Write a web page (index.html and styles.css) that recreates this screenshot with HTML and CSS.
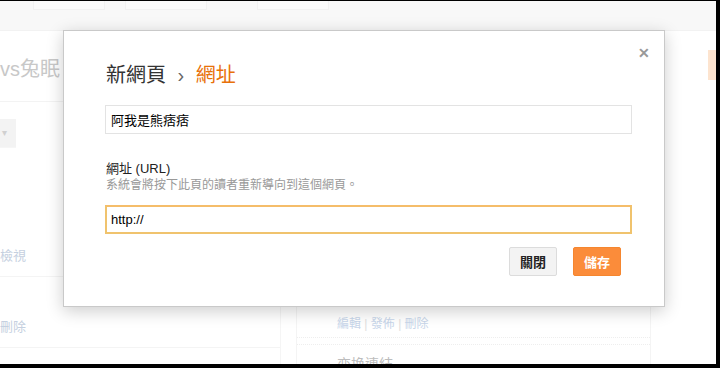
FILE: index.html
```html
<!DOCTYPE html>
<html lang="zh-Hant">
<head>
    <meta charset="UTF-8">
    <title>新網頁</title>
    <link rel="stylesheet" href="styles.css">
</head>
<body>

    <div class="frame">
        <!-- háttér oldal, elhalványítva -->
        <div class="page">
            <div class="topbar">
                <div class="tab tab-a"></div>
                <div class="tab tab-b"></div>
                <div class="tab tab-c"></div>
            </div>
            <div class="page-body">
                <div class="left-col">
                    <div class="blog-name">vs兔眠</div>
                    <div class="dropdown">▾</div>
                    <div class="row row-view">檢視</div>
                    <div class="row row-del">刪除</div>
                </div>
                <div class="mid-col">
                    <div class="panel">
                        <div class="links">編輯 <span class="sep">|</span> 發佈 <span class="sep">|</span> 刪除</div>
                        <div class="dots"></div>
                        <div class="convert">变换連結</div>
                    </div>
                </div>
                <div class="right-col">
                    <div class="orange-btn"></div>
                </div>
            </div>
        </div>

        <!-- párbeszédablak -->
        <div class="dialog">
            <span class="close">&#x2715;</span>
            <h1 class="title">新網頁 <span class="crumb">›</span> <span class="current">網址</span></h1>
            <input class="field" type="text" value="阿我是熊痞痞">
            <div class="label">網址 (URL)</div>
            <div class="hint">系統會將按下此頁的讀者重新導向到這個網頁。</div>
            <input class="field field-focus" type="text" value="http://">
            <div class="actions">
                <button class="btn btn-close">關閉</button>
                <button class="btn btn-save">儲存</button>
            </div>
        </div>
    </div>

</body>
</html>
```

FILE: styles.css
```css
body {
    margin: 0;
    padding: 0;
    background: #fff;
    font-family: 'Liberation Sans', 'Noto Sans CJK TC', sans-serif;
}

.frame {
    position: relative;
    box-sizing: border-box;
    width: 720px;
    height: 368px;
    border-top: 1px solid #000;
    border-right: 4px solid #000;
    border-bottom: 4px solid #000;
    overflow: hidden;
    background: #fff;
}

/* Háttér oldal */
.page {
    display: flex;
    flex-direction: column;
    height: 100%;
    color: #c8c8c8;
}

.topbar {
    display: flex;
    gap: 20px;
    height: 30px;
    padding-left: 33px;
    background: #f8f8f8;
    border-bottom: 1px solid #f2f2f2;
    box-sizing: border-box;
}

.tab {
    height: 8px;
    border: 1px solid #f1f1f1;
    border-top: none;
    background: #fafafa;
}

.tab-a { width: 70px; }
.tab-b { width: 80px; }
.tab-c { width: 70px; margin-left: 30px; }

.page-body {
    display: flex;
    flex: 1;
}

.left-col {
    width: 280px;
    border-right: 1px solid #f5f5f5;
}

.blog-name {
    margin-top: 28px;
    font-size: 20px;
    line-height: 20px;
    height: 42px;
    border-bottom: 1px solid #f3f3f3;
}

.dropdown {
    margin-top: 17px;
    width: 16px;
    height: 28px;
    background: #f3f3f3;
    font-size: 10px;
    line-height: 28px;
    color: #d0d0d0;
    text-indent: 2px;
    margin-bottom: 64px;
    border-bottom: 1px solid #f6f6f6;
}

.row {
    font-size: 13px;
    color: #c5d0e0;
    height: 40px;
    line-height: 40px;
    border-bottom: 1px solid #f4f4f4;
}

.row-view { padding-top: 24px; }
.row-del { padding-top: 30px; }

.mid-col {
    display: flex;
    flex-direction: column;
    justify-content: flex-end;
    width: 370px;
}

.panel {
    margin-left: 15px;
    border-left: 1px solid #f4f4f4;
    border-right: 1px solid #f4f4f4;
    height: 58px;
    padding-left: 40px;
}

.links {
    font-size: 12px;
    color: #c8d6ea;
    margin-top: 8px;
}

.sep { color: #e0e0e0; }

.dots {
    margin: 6px 0 0 -40px;
    height: 6px;
    border-top: 1px dotted #eee;
    border-bottom: 1px dotted #eee;
}

.convert {
    font-size: 14px;
    color: #bdbdbd;
    margin-top: 8px;
}

.right-col {
    flex: 1;
    display: flex;
    justify-content: flex-end;
}

.orange-btn {
    margin-top: 19px;
    width: 8px;
    height: 30px;
    background: #fde4cf;
}

/* Párbeszédablak */
.dialog {
    position: absolute;
    left: 63px;
    top: 29px;
    box-sizing: border-box;
    width: 602px;
    height: 277px;
    padding: 30px 32px 0 42px;
    background: #fff;
    border: 1px solid #c9c9c9;
    box-shadow: 0 4px 16px rgba(0, 0, 0, 0.2);
    display: flex;
    flex-direction: column;
}

.close {
    position: absolute;
    top: 14px;
    right: 14px;
    font-size: 14px;
    font-weight: bold;
    color: #999;
}

.title {
    margin: 0 0 16px 0;
    font-size: 20px;
    font-weight: normal;
    line-height: 28px;
    color: #333;
}

.crumb {
    color: #666;
    margin: 0 6px;
}

.current {
    color: #e8710a;
}

.field {
    box-sizing: border-box;
    width: 527px;
    height: 29px;
    margin: 0 0 0 -1px;
    padding: 0 5px;
    border: 1px solid #e3e3e3;
    font-family: 'Liberation Sans', 'Noto Sans CJK TC', sans-serif;
    font-size: 13px;
    color: #000;
    outline: none;
}

.field-focus {
    border: 2px solid #f0c36d;
    border-top-color: #f5bd6a;
    padding: 0 4px;
}

.label {
    margin-top: 26px;
    font-size: 13px;
    line-height: 17px;
    color: #222;
}

.hint {
    font-size: 12px;
    line-height: 17px;
    color: #999;
    margin-bottom: 11px;
}

.actions {
    display: flex;
    justify-content: flex-end;
    gap: 16px;
    width: 515px;
    margin-top: 13px;
}

.btn {
    height: 29px;
    min-width: 48px;
    padding: 0 10px;
    font-family: 'Liberation Sans', 'Noto Sans CJK TC', sans-serif;
    font-size: 13px;
    font-weight: bold;
    border-radius: 2px;
}

.btn-close {
    background: #f3f3f3;
    border: 1px solid #dcdcdc;
    color: #222;
}

.btn-save {
    background: #fb8c3a;
    border: 1px solid #f5862f;
    color: #fff;
}
```
